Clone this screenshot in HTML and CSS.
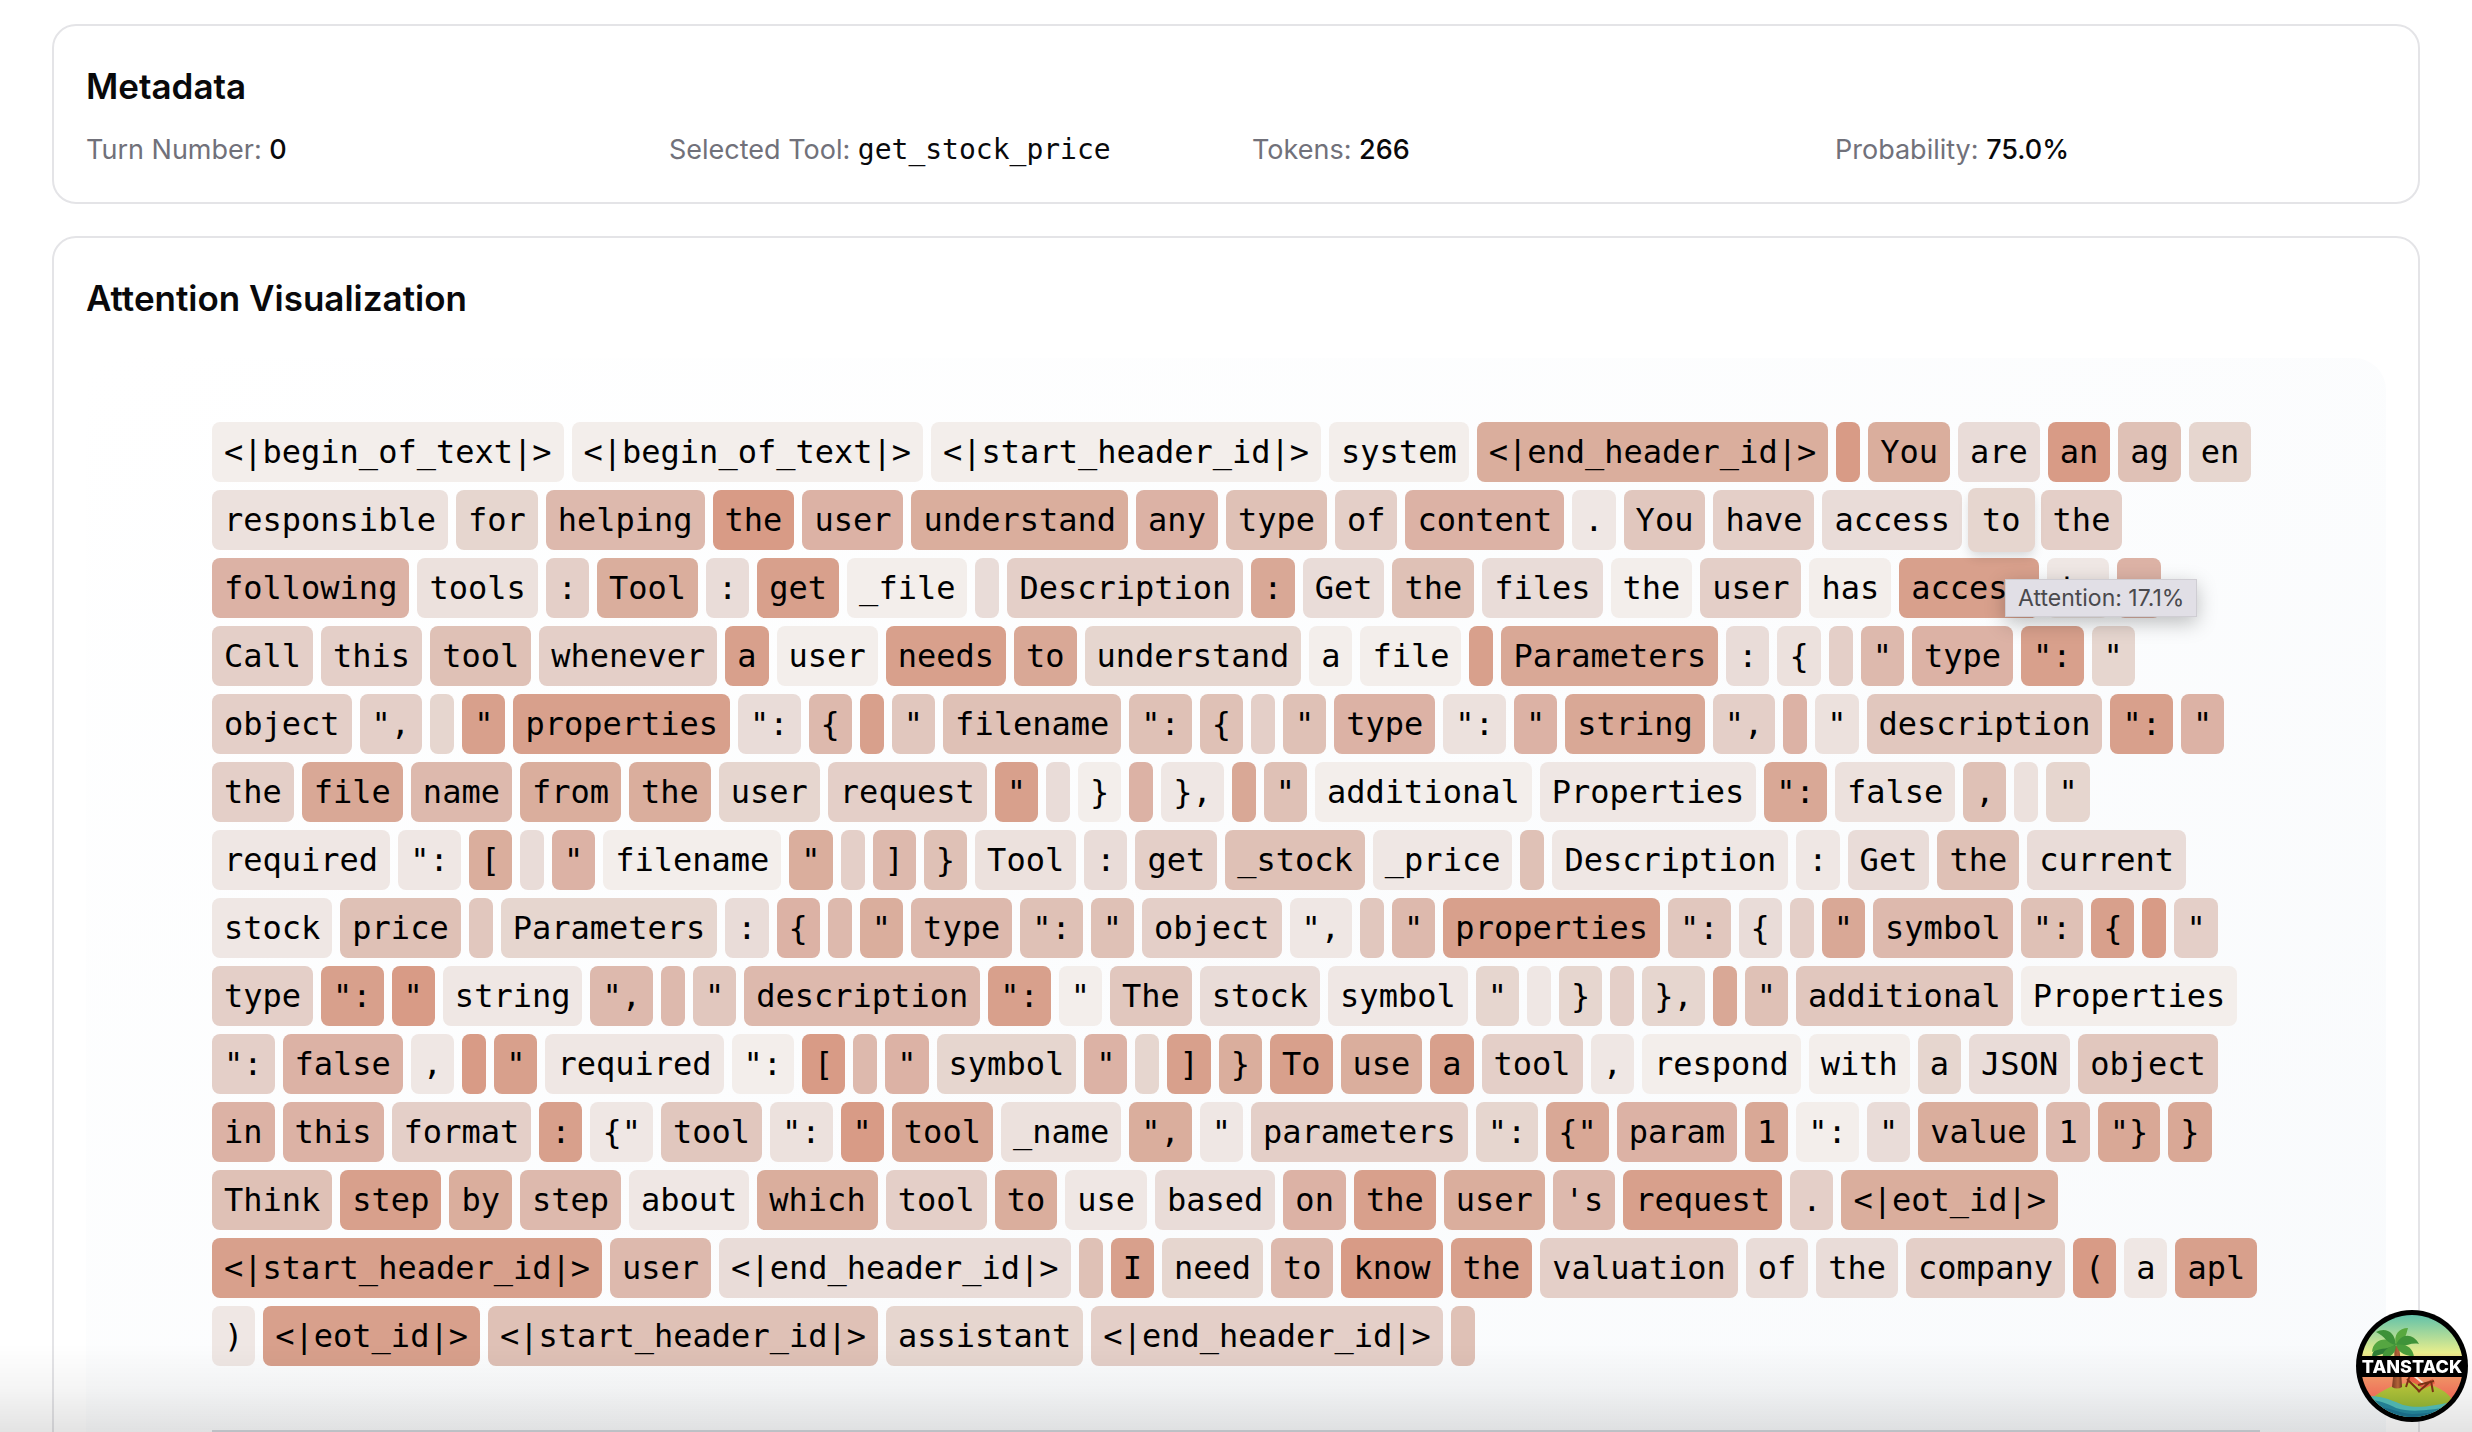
FILE: index.html
```html
<!DOCTYPE html>
<html lang="en">
<head>
<meta charset="utf-8">
<meta name="viewport" content="width=device-width, initial-scale=1">
<title>Attention Visualization</title>
<link rel="stylesheet" href="styles.css">
</head>
<body>
<main class="page">
  <section class="card">
    <h2 class="card-title">Metadata</h2>
    <dl class="meta">
      <div><dt>Turn Number:</dt> <dd>0</dd></div>
      <div><dt>Selected Tool:</dt> <dd class="code">get_stock_price</dd></div>
      <div><dt>Tokens:</dt> <dd>266</dd></div>
      <div><dt>Probability:</dt> <dd>75.0%</dd></div>
    </dl>
  </section>

  <section class="card">
    <h2 class="card-title">Attention Visualization</h2>
    <div class="panel">
      <div class="panel-inner">
        <div class="tokens">
          <span class="h0">&lt;|begin_of_text|&gt;</span><span class="h0">&lt;|begin_of_text|&gt;</span><span class="h0">&lt;|start_header_id|&gt;</span><span class="h0">system</span><span class="h10">&lt;|end_header_id|&gt;</span><span class="h13"></span><span class="h10">You</span><span class="h3">are</span><span class="h13">an</span><span class="h7">ag</span><span class="h4">en</span>
          <span class="h2">responsible</span><span class="h4">for</span><span class="h8">helping</span><span class="h13">the</span><span class="h9">user</span><span class="h10">understand</span><span class="h9">any</span><span class="h7">type</span><span class="h5">of</span><span class="h9">content</span><span class="h1">.</span><span class="h6">You</span><span class="h5">have</span><span class="h3">access</span><span class="h4 active">to<span class="tooltip" role="tooltip">Attention: 17.1%</span></span><span class="h5">the</span>
          <span class="h9">following</span><span class="h2">tools</span><span class="h5">:</span><span class="h10">Tool</span><span class="h3">:</span><span class="h12">get</span><span class="h0">_file</span><span class="h3"></span><span class="h5">Description</span><span class="h11">:</span><span class="h3">Get</span><span class="h7">the</span><span class="h3">files</span><span class="h0">the</span><span class="h5">user</span><span class="h0">has</span><span class="h12">access</span><span class="h1">to</span><span class="h9">.</span>
          <span class="h5">Call</span><span class="h5">this</span><span class="h7">tool</span><span class="h5">whenever</span><span class="h12">a</span><span class="h0">user</span><span class="h12">needs</span><span class="h11">to</span><span class="h4">understand</span><span class="h0">a</span><span class="h0">file</span><span class="h12"></span><span class="h11">Parameters</span><span class="h3">:</span><span class="h2">{</span><span class="h5"></span><span class="h8">"</span><span class="h9">type</span><span class="h12">":</span><span class="h4">"</span>
          <span class="h5">object</span><span class="h5">",</span><span class="h4"></span><span class="h12">"</span><span class="h12">properties</span><span class="h3">":</span><span class="h8">{</span><span class="h12"></span><span class="h6">"</span><span class="h7">filename</span><span class="h7">":</span><span class="h7">{</span><span class="h5"></span><span class="h7">"</span><span class="h9">type</span><span class="h2">":</span><span class="h9">"</span><span class="h11">string</span><span class="h5">",</span><span class="h9"></span><span class="h2">"</span><span class="h6">description</span><span class="h12">":</span><span class="h9">"</span>
          <span class="h5">the</span><span class="h11">file</span><span class="h8">name</span><span class="h10">from</span><span class="h10">the</span><span class="h4">user</span><span class="h5">request</span><span class="h12">"</span><span class="h3"></span><span class="h0">}</span><span class="h9"></span><span class="h1">},</span><span class="h11"></span><span class="h7">"</span><span class="h0">additional</span><span class="h1">Properties</span><span class="h11">":</span><span class="h2">false</span><span class="h7">,</span><span class="h2"></span><span class="h4">"</span>
          <span class="h1">required</span><span class="h1">":</span><span class="h10">[</span><span class="h3"></span><span class="h9">"</span><span class="h0">filename</span><span class="h10">"</span><span class="h5"></span><span class="h8">]</span><span class="h7">}</span><span class="h2">Tool</span><span class="h3">:</span><span class="h5">get</span><span class="h7">_stock</span><span class="h1">_price</span><span class="h7"></span><span class="h1">Description</span><span class="h1">:</span><span class="h3">Get</span><span class="h7">the</span><span class="h3">current</span>
          <span class="h1">stock</span><span class="h7">price</span><span class="h6"></span><span class="h4">Parameters</span><span class="h3">:</span><span class="h9">{</span><span class="h8"></span><span class="h10">"</span><span class="h8">type</span><span class="h7">":</span><span class="h7">"</span><span class="h5">object</span><span class="h1">",</span><span class="h6"></span><span class="h8">"</span><span class="h12">properties</span><span class="h6">":</span><span class="h3">{</span><span class="h5"></span><span class="h11">"</span><span class="h8">symbol</span><span class="h7">":</span><span class="h12">{</span><span class="h13"></span><span class="h5">"</span>
          <span class="h5">type</span><span class="h12">":</span><span class="h13">"</span><span class="h1">string</span><span class="h8">",</span><span class="h8"></span><span class="h6">"</span><span class="h8">description</span><span class="h12">":</span><span class="h0">"</span><span class="h6">The</span><span class="h3">stock</span><span class="h1">symbol</span><span class="h4">"</span><span class="h1"></span><span class="h4">}</span><span class="h5"></span><span class="h4">},</span><span class="h11"></span><span class="h7">"</span><span class="h6">additional</span><span class="h0">Properties</span>
          <span class="h5">":</span><span class="h9">false</span><span class="h1">,</span><span class="h13"></span><span class="h12">"</span><span class="h1">required</span><span class="h0">":</span><span class="h13">[</span><span class="h8"></span><span class="h9">"</span><span class="h4">symbol</span><span class="h9">"</span><span class="h4"></span><span class="h12">]</span><span class="h10">}</span><span class="h12">To</span><span class="h10">use</span><span class="h12">a</span><span class="h5">tool</span><span class="h1">,</span><span class="h0">respond</span><span class="h0">with</span><span class="h4">a</span><span class="h3">JSON</span><span class="h6">object</span>
          <span class="h9">in</span><span class="h9">this</span><span class="h5">format</span><span class="h12">:</span><span class="h1">{"</span><span class="h6">tool</span><span class="h2">":</span><span class="h13">"</span><span class="h11">tool</span><span class="h2">_name</span><span class="h10">",</span><span class="h1">"</span><span class="h5">parameters</span><span class="h4">":</span><span class="h11">{"</span><span class="h9">param</span><span class="h11">1</span><span class="h0">":</span><span class="h3">"</span><span class="h10">value</span><span class="h8">1</span><span class="h11">"}</span><span class="h11">}</span>
          <span class="h7">Think</span><span class="h12">step</span><span class="h10">by</span><span class="h8">step</span><span class="h1">about</span><span class="h10">which</span><span class="h5">tool</span><span class="h10">to</span><span class="h1">use</span><span class="h3">based</span><span class="h9">on</span><span class="h12">the</span><span class="h10">user</span><span class="h8">'s</span><span class="h12">request</span><span class="h5">.</span><span class="h10">&lt;|eot_id|&gt;</span>
          <span class="h12">&lt;|start_header_id|&gt;</span><span class="h8">user</span><span class="h3">&lt;|end_header_id|&gt;</span><span class="h7"></span><span class="h12">I</span><span class="h4">need</span><span class="h8">to</span><span class="h13">know</span><span class="h12">the</span><span class="h5">valuation</span><span class="h3">of</span><span class="h3">the</span><span class="h5">company</span><span class="h13">(</span><span class="h1">a</span><span class="h12">apl</span>
          <span class="h1">)</span><span class="h12">&lt;|eot_id|&gt;</span><span class="h7">&lt;|start_header_id|&gt;</span><span class="h4">assistant</span><span class="h5">&lt;|end_header_id|&gt;</span><span class="h7"></span>
        </div>
        <div class="panel-footer"></div>
      </div>
    </div>
  </section>
</main>

<div class="fade"></div>

<button class="devtools" type="button" aria-label="Open TanStack Devtools">
  <svg viewBox="0 0 112 112" aria-hidden="true">
    <defs>
      <linearGradient id="sky" x1="0" y1="0" x2="0" y2="1">
        <stop offset="0" stop-color="#50bcae"/><stop offset=".38" stop-color="#e8ee8c"/>
        <stop offset=".56" stop-color="#f09a68"/><stop offset=".78" stop-color="#ee6c58"/>
      </linearGradient>
      <linearGradient id="hill" x1="0" y1="0" x2="0" y2="1">
        <stop offset="0" stop-color="#b9c43a"/><stop offset="1" stop-color="#6f9c2c"/>
      </linearGradient>
      <linearGradient id="trunk" x1="0" y1="0" x2="1" y2="0">
        <stop offset="0" stop-color="#7a3a22"/><stop offset=".6" stop-color="#b5653a"/><stop offset="1" stop-color="#6d331f"/>
      </linearGradient>
      <clipPath id="disc"><circle cx="56" cy="56" r="51"/></clipPath>
    </defs>
    <circle cx="56" cy="56" r="56" fill="#000"/>
    <g clip-path="url(#disc)">
      <rect width="112" height="112" fill="url(#sky)"/>
      <path d="M14 90C30 76 46 72 62 73 80 74 92 82 98 92L90 112H14Z" fill="url(#hill)"/>
      <path d="M36 77C38 60 39 50 38 36L43 36C45 50 45 64 46 77Q41 80 36 77Z" fill="url(#trunk)"/>
      <path d="M0 88C18 84 28 87 40 92 54 99 68 99 112 88V112H0Z" fill="#4fb3ad"/>
      <path d="M0 91C18 88 28 92 40 98 56 103 70 101 112 94V112H0Z" fill="#237f93"/>
      <path d="M14 97C30 95 40 103 56 104 70 104 82 101 100 99V112H14Z" fill="#1a6a85"/>
      <path d="M40 34C28 33 16 38 16 47 27 44 36 42 40 34Z" fill="#2f7d35"/>
      <path d="M40 34C31 26 17 29 16 42 26 37 34 40 40 34Z" fill="#55a641"/>
      <path d="M40 35C39 21 29 17 20 22 29 26 31 34 40 35Z" fill="#3d9139"/>
      <path d="M40 35C37 25 43 18 52 18 50 25 49 32 40 35Z" fill="#58a83f"/>
      <path d="M40 35C45 23 57 23 63 34 54 32 49 38 40 35Z" fill="#3f9339"/>
      <path d="M40 35C50 33 57 38 58 47 50 45 43 44 40 35Z" fill="#4a9d3b"/>
      <path d="M40 35C30 37 25 43 27 49 35 47 40 43 40 35Z" fill="#46983a"/>
      <path d="M53 67L68 76 78 71" fill="none" stroke="#e85f45" stroke-width="5"/>
      <path d="M57 65L68 74" stroke="#fbe6d4" stroke-width="2"/>
      <path d="M54 65L50 77M51 69L64 82M75 71L77 82M75 71L62 82M62 75L78 71" fill="none" stroke="#7b3115" stroke-width="2"/>
    </g>
    <path d="M2 46H110L111 56 110 67H2L1 56Z" fill="#000"/>
    <text x="56" y="63" text-anchor="middle">TANSTACK</text>
  </svg>
</button>
</body>
</html>
```
FILE: styles.css
```css
* {
  box-sizing: border-box;
}

body {
  margin: 0;
  height: 100vh;
  overflow: hidden;
  background: #fff;
  color: #09090b;
  font-family: Inter, "Liberation Sans", sans-serif;
}

.page {
  display: flex;
  flex-direction: column;
  gap: 32px;
  padding: 24px 52px;
}

.card {
  padding: 32px;
  border: 2px solid #e4e4e7;
  border-radius: 24px;
}

.card-title {
  margin: 0;
  font-size: 35px;
  font-weight: 600;
  line-height: 56px;
}

.meta {
  display: grid;
  grid-template-columns: repeat(4, 1fr);
  gap: 32px;
  margin: 16px 0 0;
  font-size: 27px;
  line-height: 40px;
}

.meta dt,
.meta dd {
  display: inline;
  margin: 0;
}

.meta dt {
  color: #71717a;
}

.meta dd {
  font-weight: 500;
}

.meta .code,
.tokens {
  font-family: "DejaVu Sans Mono", "Liberation Mono", monospace;
  font-weight: 400;
}

.meta .code {
  font-size: 28px;
}

.panel {
  margin-top: 32px;
  padding: 64px;
  border-radius: 32px;
  background: linear-gradient(to bottom right, #fff, #f8fafc);
}

.panel-inner {
  max-width: 2048px;
  margin: 0 auto;
}

.tokens {
  display: flex;
  flex-wrap: wrap;
  gap: 8px;
  color: #000;
  font-size: 32px;
  line-height: 44px;
}

.tokens > span {
  min-height: 60px;
  padding: 8px 12px;
  border-radius: 8px;
}

.h0 { background: #f3eeeb; }
.h1 { background: #efe7e4; }
.h2 { background: #ece1dd; }
.h3 { background: #e9dcd8; }
.h4 { background: #e6d6cf; }
.h5 { background: #e4cfc8; }
.h6 { background: #e1c7be; }
.h7 { background: #dfc1b6; }
.h8 { background: #ddb9ad; }
.h9 { background: #dcb2a5; }
.h10 { background: #daae9d; }
.h11 { background: #d9a896; }
.h12 { background: #d8a08c; }
.h13 { background: #d89b86; }

.tokens > .active {
  position: relative;
  z-index: 1;
  margin: -2px;
  padding: 10px 14px;
  box-shadow: 0 6px 12px -2px rgb(0 0 0 / 16%);
}

.tooltip {
  position: absolute;
  top: 91px;
  left: 37px;
  padding: 4px 12px;
  border: 1px solid #cfcdd3;
  background: #e1dfe6;
  box-shadow: 0 6px 20px rgb(0 0 0 / 25%);
  color: #4a494d;
  font-family: Inter, "Liberation Sans", sans-serif;
  font-size: 23px;
  line-height: 28px;
  white-space: nowrap;
}

.panel-footer {
  margin-top: 64px;
  min-height: 120px;
  border-top: 2px solid #d4d8de;
}

.fade {
  position: fixed;
  inset: auto 0 0;
  height: 88px;
  background: linear-gradient(to bottom, rgb(0 0 0 / 0%), rgb(0 0 0 / 4%) 50%, rgb(0 0 0 / 11%));
  pointer-events: none;
}

.devtools {
  position: fixed;
  right: 4px;
  bottom: 10px;
  width: 112px;
  height: 112px;
  padding: 0;
  border: 0;
  border-radius: 50%;
  background: none;
}

.devtools svg {
  display: block;
}

.devtools text {
  fill: #fff;
  font-family: Inter, "Liberation Sans", sans-serif;
  font-size: 18px;
  font-weight: 800;
}
```
